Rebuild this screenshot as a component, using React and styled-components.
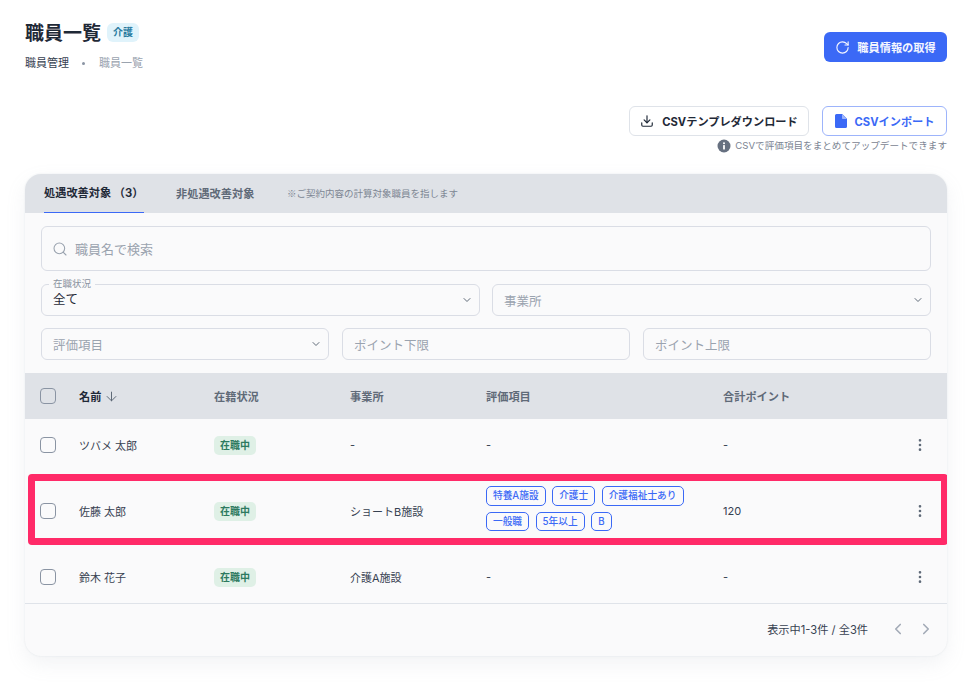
import { createGlobalStyle, styled } from 'styled-components';
import { ArrowDown, ChevronDown, ChevronLeft, ChevronRight, Download, EllipsisVertical, RotateCw, Search } from 'lucide-react';

const FONT = 'Inter, "Noto Sans CJK JP", sans-serif';

const rows = [
  { id: 1, name: 'ツバメ 太郎', office: '-', tags: [], points: '-' },
  {
    id: 2,
    name: '佐藤 太郎',
    office: 'ショートB施設',
    tags: ['特養A施設', '介護士', '介護福祉士あり', '一般職', '5年以上', 'B'],
    points: '120',
    highlighted: true,
  },
  { id: 3, name: '鈴木 花子', office: '介護A施設', tags: [], points: '-' },
];

const GlobalStyle = createGlobalStyle`
  * { box-sizing: border-box; }
  body {
    margin: 0;
    background: #fff;
    font-family: ${FONT};
    color: #1f2937;
  }
`;

const Page = styled.div`
  width: 970px;
  height: 690px;
  padding: 17px 23px 0 25px;
  overflow: hidden;
`;

const PageHeader = styled.header`
  display: flex;
  justify-content: space-between;
  align-items: flex-start;
`;

const TitleRow = styled.div`
  display: flex;
  align-items: center;
  gap: 6px;
  height: 28px;
`;

const Title = styled.h1`
  margin: 0;
  font-size: 19px;
  font-weight: 700;
  color: #1f2937;
`;

const KindBadge = styled.span`
  margin-top: 2px;
  font-size: 10px;
  font-weight: 600;
  line-height: 19px;
  padding: 0 6px;
  border-radius: 6px;
  background: #e0f3fb;
  color: #2a7ba0;
`;

const Breadcrumb = styled.div`
  display: flex;
  align-items: center;
  margin-top: 9px;
  font-size: 11px;
  line-height: 18px;
  color: #374151;
`;

const Dot = styled.span`
  width: 3px;
  height: 3px;
  margin: 0 14px 0 13px;
  border-radius: 50%;
  background: #8a94a3;
`;

const Current = styled.span`
  color: #9aa3af;
`;

const Button = styled.button`
  display: flex;
  align-items: center;
  justify-content: center;
  height: 30px;
  border-radius: 6px;
  font-family: inherit;
  font-size: 11.2px;
  font-weight: 700;
  white-space: nowrap;
`;

const FetchButton = styled(Button)`
  width: 123px;
  margin-top: 15px;
  gap: 7px;
  border: 0;
  background: #3b69f6;
  color: #f4f6ff;
`;

const CsvSection = styled.section`
  display: flex;
  flex-direction: column;
  align-items: flex-end;
  margin-top: 34px;
`;

const CsvButtons = styled.div`
  display: flex;
  gap: 13px;
`;

const TemplateButton = styled(Button)`
  width: 180px;
  gap: 8px;
  background: #fff;
  border: 1px solid #dfe3e9;
  color: #1f2937;
`;

const ImportButton = styled(Button)`
  width: 125px;
  gap: 8px;
  background: #fff;
  border: 1px solid #9db4fb;
  color: #3b69f6;
`;

const CsvNote = styled.p`
  display: flex;
  align-items: center;
  gap: 4px;
  margin: 2px 0 0;
  font-size: 9.6px;
  line-height: 16px;
  color: #7b8492;
`;

const Card = styled.section`
  margin-top: 20px;
  height: 482px;
  border-radius: 16px;
  background: #fafafb;
  box-shadow: 0 8px 20px rgba(145, 158, 171, 0.12), 0 0 2px rgba(145, 158, 171, 0.2);
  overflow: hidden;
`;

const TabBar = styled.div`
  display: flex;
  align-items: stretch;
  height: 39px;
  padding-left: 19px;
  background: #dfe2e7;
`;

const Tab = styled.div`
  display: flex;
  align-items: center;
  width: ${(props) => props.$width}px;
  margin-right: ${(props) => props.$gap}px;
  padding-bottom: 2px;
  font-size: 11.2px;
  font-weight: 700;
  color: ${(props) => (props.$active ? '#1f2937' : '#5f6a78')};
  border-bottom: ${(props) => (props.$active ? '1px solid #3b69f6' : '0')};
`;

const TabNote = styled.span`
  align-self: center;
  margin-bottom: 2px;
  font-family: "Noto Sans CJK JP", sans-serif;
  font-size: 9.5px;
  color: #7d8693;
`;

const Filters = styled.div`
  display: flex;
  flex-direction: column;
  padding: 13px 16px;
`;

const Field = styled.div`
  position: relative;
  display: flex;
  align-items: center;
  flex: 1 1 0;
  min-width: 0;
  height: 32px;
  padding: 0 11px;
  border: 1px solid #dadde5;
  border-radius: 6px;
  font-size: 12.5px;
  color: #9aa3af;
`;

const SearchField = styled(Field)`
  flex: none;
  height: 45px;
  gap: 7px;
  padding: 0 10px;
  font-size: 13px;
`;

const FieldRow = styled.div`
  display: flex;
  gap: ${(props) => props.$gap}px;
  margin-top: ${(props) => props.$top}px;
`;

const FieldLabel = styled.span`
  position: absolute;
  top: -7px;
  left: 7px;
  padding: 0 4px;
  background: #fafafb;
  font-size: 9.5px;
  line-height: 12px;
  color: #8a93a0;
`;

const FieldValue = styled.span`
  margin-bottom: 4px;
  color: #1f2937;
`;

const Caret = styled(ChevronDown)`
  margin-left: auto;
  margin-right: -5px;
  color: #5f6a78;
`;

const GRID = '54px 135px 136px 136px 237px 1fr';

const TableHead = styled.div`
  display: grid;
  grid-template-columns: ${GRID};
  align-items: center;
  height: 46px;
  background: #dfe2e7;
  font-size: 11.2px;
  font-weight: 600;
  color: #5f6a78;
`;

const NameHead = styled.div`
  display: flex;
  align-items: center;
  gap: 3px;
  font-weight: 700;
  color: #1f2937;
`;

const Row = styled.div`
  position: relative;
  display: grid;
  grid-template-columns: ${GRID};
  align-items: center;
  height: ${(props) => (props.$tall ? 80 : 52)}px;
  font-size: 11px;
  color: #374151;
`;

const CheckCell = styled.div`
  padding-left: 15px;
  display: flex;
`;

const Checkbox = styled.span`
  width: 16px;
  height: 16px;
  border: 1.5px solid #8a94a3;
  border-radius: 4px;
`;

const StatusBadge = styled.span`
  justify-self: start;
  font-size: 10px;
  font-weight: 600;
  line-height: 19px;
  padding: 0 6px;
  border-radius: 5px;
  background: #dff0e6;
  color: #2d7a5f;
`;

const Tags = styled.div`
  display: flex;
  flex-wrap: wrap;
  gap: 6px 6.5px;
  width: 230px;
  margin-bottom: 5px;
`;

const Tag = styled.span`
  font-size: 9.7px;
  font-weight: 500;
  line-height: 17.5px;
  padding: 0 6px;
  border: 1px solid #3b69f6;
  border-radius: 5px;
  color: #3b69f6;
`;

const PointsCell = styled.div`
  display: flex;
  justify-content: space-between;
  align-items: center;
  padding-right: 19px;
`;

const MoreIcon = styled(EllipsisVertical)`
  color: #5f6a78;
`;

const Highlight = styled.div`
  position: absolute;
  top: 3px;
  left: 3px;
  right: -1px;
  height: 71px;
  border: 7px solid #ff2a68;
  border-radius: 4px;
  pointer-events: none;
`;

const Footer = styled.footer`
  display: flex;
  align-items: center;
  justify-content: flex-end;
  height: 51px;
  padding-right: 12px;
  border-top: 1px solid #dfe3e9;
  font-size: 11.2px;
  color: #374151;
`;

const Pager = styled.div`
  display: flex;
  gap: 10px;
  margin-left: 21px;
  color: #a3abb7;
`;

function DocIcon() {
  return (
    <svg width="12" height="14" viewBox="0 0 12 14" fill="#3b69f6">
      <path d="M1.5 0H7.2L12 4.8V12.5A1.5 1.5 0 0 1 10.5 14H1.5A1.5 1.5 0 0 1 0 12.5V1.5A1.5 1.5 0 0 1 1.5 0Z" />
      <path d="M7 0V4.2A.8.8 0 0 0 7.8 5H12Z" fill="#9db4fb" />
    </svg>
  );
}

function InfoIcon() {
  return (
    <svg width="14" height="14" viewBox="0 0 14 14">
      <circle cx="7" cy="7" r="6.5" fill="#667080" />
      <rect x="6.1" y="6" width="1.8" height="4.6" rx=".5" fill="#fff" />
      <circle cx="7" cy="4.2" r="1" fill="#fff" />
    </svg>
  );
}

export default function App() {
  return (
    <Page>
      <GlobalStyle />
      <PageHeader>
        <div>
          <TitleRow>
            <Title>職員一覧</Title>
            <KindBadge>介護</KindBadge>
          </TitleRow>
          <Breadcrumb>
            職員管理
            <Dot />
            <Current>職員一覧</Current>
          </Breadcrumb>
        </div>
        <FetchButton>
          <RotateCw size={15} strokeWidth={1.8} />
          職員情報の取得
        </FetchButton>
      </PageHeader>

      <CsvSection>
        <CsvButtons>
          <TemplateButton>
            <Download size={14} strokeWidth={2} />
            CSVテンプレダウンロード
          </TemplateButton>
          <ImportButton>
            <DocIcon />
            CSVインポート
          </ImportButton>
        </CsvButtons>
        <CsvNote>
          <InfoIcon />
          CSVで評価項目をまとめてアップデートできます
        </CsvNote>
      </CsvSection>

      <Card>
        <TabBar>
          <Tab $active $width={100} $gap={32}>処遇改善対象 （3）</Tab>
          <Tab $width={111} $gap={0}>非処遇改善対象</Tab>
          <TabNote>※ご契約内容の計算対象職員を指します</TabNote>
        </TabBar>

        <Filters>
          <SearchField>
            <Search size={16} strokeWidth={1.6} />
            職員名で検索
          </SearchField>
          <FieldRow $top={13} $gap={12}>
            <Field>
              <FieldLabel>在職状況</FieldLabel>
              <FieldValue>全て</FieldValue>
              <Caret size={12} />
            </Field>
            <Field>
              事業所
              <Caret size={12} />
            </Field>
          </FieldRow>
          <FieldRow $top={12} $gap={13}>
            <Field>
              評価項目
              <Caret size={12} />
            </Field>
            <Field>ポイント下限</Field>
            <Field>ポイント上限</Field>
          </FieldRow>
        </Filters>

        <TableHead>
          <CheckCell><Checkbox /></CheckCell>
          <NameHead>
            名前
            <ArrowDown size={15} strokeWidth={1.6} color="#5f6a78" />
          </NameHead>
          <div>在籍状況</div>
          <div>事業所</div>
          <div>評価項目</div>
          <div>合計ポイント</div>
        </TableHead>

        {rows.map((row) => (
          <Row key={row.id} $tall={row.highlighted}>
            <CheckCell><Checkbox /></CheckCell>
            <div>{row.name}</div>
            <StatusBadge>在職中</StatusBadge>
            <div>{row.office}</div>
            {row.tags.length > 0 ? (
              <Tags>
                {row.tags.map((tag) => (
                  <Tag key={tag}>{tag}</Tag>
                ))}
              </Tags>
            ) : (
              <div>-</div>
            )}
            <PointsCell>
              <span>{row.points}</span>
              <MoreIcon size={16} />
            </PointsCell>
            {row.highlighted && <Highlight />}
          </Row>
        ))}

        <Footer>
          表示中1-3件 / 全3件
          <Pager>
            <ChevronLeft size={18} strokeWidth={2.2} />
            <ChevronRight size={18} strokeWidth={2.2} />
          </Pager>
        </Footer>
      </Card>
    </Page>
  );
}
